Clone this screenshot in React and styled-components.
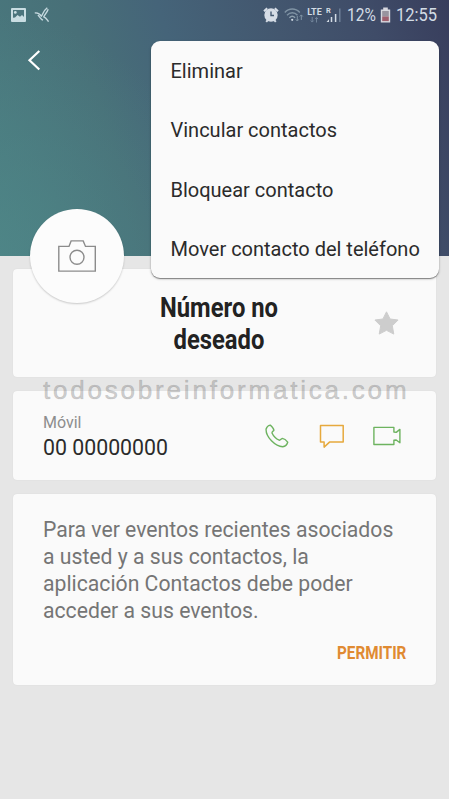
import styled, { createGlobalStyle } from "styled-components";

const GlobalStyle = createGlobalStyle`
  * {
    box-sizing: border-box;
  }
  body {
    margin: 0;
    font-family: Roboto, "Liberation Sans", sans-serif;
    background-color: #e6e6e6;
  }
`;

const Screen = styled.div`
  position: relative;
  width: 449px;
  height: 799px;
  overflow: hidden;
  background-color: #e6e6e6;
`;

const Header = styled.header`
  height: 256px;
  background: radial-gradient(
      ellipse 260px 260px at -30px 270px,
      rgba(80, 138, 138, 0.75),
      rgba(78, 126, 132, 0)
    ),
    linear-gradient(72deg, #4a7c80 0%, #487078 28%, #456479 45%, #43576f 66%, #3f4c68 84%, #383d5c 100%);
`;

const StatusBar = styled.div`
  display: flex;
  align-items: center;
  justify-content: space-between;
  height: 30px;
  padding: 0 11px 0 11px;
  color: #d3dce5;
`;

const StatusGroup = styled.div`
  display: flex;
  align-items: center;
`;

const StatusIcon = styled.svg`
  display: block;
  flex: none;
  margin-left: ${(props) => props.$gap || 0}px;
`;

const StatusText = styled.div`
  width: ${(props) => props.$width}px;
  margin-left: ${(props) => props.$gap}px;
  font-size: 19px;
  line-height: 32px;
  white-space: nowrap;
  transform: scaleX(${(props) => props.$squeeze});
  transform-origin: left center;
`;

const Network = styled.div`
  display: flex;
  flex-direction: column;
  align-items: center;
  width: 17px;
  margin-left: 2px;
  font-size: 9px;
  font-weight: 700;
  line-height: 9px;
`;

const BackButton = styled.button`
  display: block;
  margin: 18px 0 0 26px;
  padding: 0;
  border: none;
  background: none;
  cursor: pointer;
`;

const Menu = styled.ul`
  position: absolute;
  top: 41px;
  left: 151px;
  z-index: 2;
  width: 288px;
  height: 237px;
  margin: 0;
  padding: 0;
  list-style: none;
  background-color: #fafafa;
  border-radius: 9px;
  box-shadow: 0 1px 1px rgba(0, 0, 0, 0.4), 0 1px 3px rgba(0, 0, 0, 0.2);
`;

const MenuItem = styled.li`
  display: flex;
  align-items: center;
  height: 59.5px;
  padding-left: 19.5px;
  font-size: 20px;
  color: #2b2b2b;
  white-space: nowrap;
`;

const Avatar = styled.div`
  position: absolute;
  top: 209px;
  left: 30px;
  z-index: 1;
  display: flex;
  align-items: center;
  justify-content: center;
  width: 94px;
  height: 94px;
  border-radius: 50%;
  background-color: #fcfcfc;
  box-shadow: 0 1px 2px rgba(0, 0, 0, 0.2);
`;

const Cards = styled.main`
  display: flex;
  flex-direction: column;
  gap: 14px;
  padding: 13px;
`;

const Card = styled.section`
  height: ${(props) => props.$height}px;
  background-color: #fafafa;
  border-radius: 4px;
  box-shadow: 0 0 1px rgba(0, 0, 0, 0.12);
`;

const NameCard = styled(Card)`
  display: grid;
  grid-template-columns: 106px 200px 1fr;
  align-items: center;
`;

const Name = styled.h1`
  grid-column: 2;
  margin: 2px 0 0;
  font-size: 27.5px;
  line-height: 32px;
  font-weight: 700;
  text-align: center;
  color: #222;
  transform: scaleX(0.865);
`;

const Favorite = styled.svg`
  justify-self: end;
  margin-right: 37px;
`;

const PhoneCard = styled(Card)`
  display: flex;
  align-items: center;
  justify-content: space-between;
  padding: 0 35px 0 30px;
`;

const Label = styled.div`
  padding-top: 3px;
  font-size: 16px;
  line-height: 20px;
  color: #8d8d8d;
`;

const Number = styled.div`
  font-size: 21.3px;
  line-height: 29px;
  color: #2b2b2b;
  white-space: nowrap;
`;

const Actions = styled.div`
  display: flex;
  align-items: center;
`;

const ActionIcon = styled.svg`
  display: block;
  margin-left: ${(props) => props.$gap || 0}px;
`;

const EventsCard = styled(Card)`
  padding: 22px 28px 0 30px;
`;

const Message = styled.p`
  margin: 0;
  font-size: 21.2px;
  line-height: 27px;
  color: #757575;
  white-space: nowrap;
`;

const AllowButton = styled.button`
  display: block;
  width: 71px;
  margin: 17px 0 0 auto;
  padding: 0;
  border: none;
  background: none;
  font-family: inherit;
  font-size: 17.5px;
  line-height: 24px;
  font-weight: 700;
  text-align: left;
  white-space: nowrap;
  color: #e08a32;
  transform: scaleX(0.87);
  transform-origin: left center;
  cursor: pointer;
`;

const Watermark = styled.div`
  position: absolute;
  top: 375px;
  left: 43px;
  font-family: "Liberation Sans", sans-serif;
  font-size: 26px;
  line-height: 30px;
  letter-spacing: 2.8px;
  color: rgba(120, 120, 120, 0.34);
  -webkit-text-stroke: 0.7px rgba(120, 120, 120, 0.24);
  white-space: nowrap;
  pointer-events: none;
`;

const options = [
  "Eliminar",
  "Vincular contactos",
  "Bloquear contacto",
  "Mover contacto del teléfono",
];

const App = () => {
  return (
    <Screen>
      <GlobalStyle />
      <Header>
        <StatusBar>
          <StatusGroup>
            <StatusIcon width="15" height="14" viewBox="0 0 15 14">
              <rect width="15" height="14" rx="1" fill="#c9dde2" />
              <path d="M2 2h11v7l-2-2-2 1.800L6.500 7 4 9.500 2 9.800z" fill="#4b747c" />
              <circle cx="4.3" cy="4.4" r="1.4" fill="#c9dde2" />
            </StatusIcon>
            <StatusIcon $gap={8} width="16" height="16" viewBox="0 0 16 16">
              <path
                d="M0.800 6C3.500 5.600 5.500 6.200 7.300 9.200 9 7.500 8.500 4.500 13.300 0.800M4 7.800C5.500 10 7.500 12.500 9 13.200M14.200 2.200C13.200 5 10.800 7.800 9.800 9.800 12 10.500 13.200 12.800 14.600 14.700"
                fill="none"
                stroke="#c5d9df"
                strokeWidth="1.4"
              />
            </StatusIcon>
          </StatusGroup>
          <StatusGroup>
            <StatusIcon width="16" height="16" viewBox="0 0 16 16">
              <path d="M1 4.3 4.2 1.2M15 4.3 11.8 1.2M3.2 14.8l1.7-2M12.8 14.8l-1.7-2" stroke="#d6dde6" strokeWidth="2" />
              <circle cx="8" cy="8" r="6.7" fill="#d6dde6" />
              <path d="M8 4.4V8.5h3" fill="none" stroke="#465b72" strokeWidth="1.4" />
            </StatusIcon>
            <StatusIcon $gap={5} width="20" height="16" viewBox="0 0 20 16">
              <g fill="none" stroke="#7f93a4" strokeWidth="1.4">
                <path d="M0.8 5.5C5 0.8 11.5 0.8 15.8 5.5" />
                <path d="M3 8.2c3-3.200 7.500-3.200 10.500 0" />
                <path d="M5.400 10.700c1.700-1.700 4-1.700 5.700 0" stroke="#8d9fae" />
                <path d="M13.300 9v5M11.800 12.400l1.500 1.600 1.500-1.600M17.300 13v-5M15.800 9.500l1.500-1.600L18.800 9.500" strokeWidth="1" />
              </g>
              <circle cx="8.2" cy="12.8" r="1.1" fill="#d3dce5" />
            </StatusIcon>
            <Network>
              LTE
              <svg width="9" height="6" viewBox="0 0 9 6">
                <path
                  d="M2.200 0v5M0.700 3.500l1.500 1.600 1.500-1.600M6.500 5.500v-5M5 2l1.500-1.600L8 2"
                  fill="none"
                  stroke="#71849a"
                />
              </svg>
            </Network>
            <StatusIcon $gap={3} width="16" height="16" viewBox="0 0 16 16">
              <text x="0" y="6.2" fontSize="7.5" fontWeight="700" fill="#d3dce5">
                R
              </text>
              <path d="M0.500 15 3 12.300V15z" fill="#d3dce5" />
              <path d="M5.500 10V15M9.600 7v8" stroke="#d3dce5" strokeWidth="1.5" />
              <path d="M13.800 1.500V15" stroke="#70829a" strokeWidth="1.4" />
            </StatusIcon>
            <StatusText $width={29} $gap={5} $squeeze={0.82}>
              12%
            </StatusText>
            <StatusIcon $gap={4} width="11" height="16" viewBox="0 0 11 16">
              <path d="M3.200 0.500h4.600v2H10.200V15.500H0.800V2.500h2.400z" fill="#d7d8df" />
              <rect x="2.2" y="4" width="6.6" height="5.5" fill="#98949f" />
              <rect x="2.2" y="9.5" width="6.6" height="4.6" fill="#9e606f" />
            </StatusIcon>
            <StatusText $width={42} $gap={5} $squeeze={0.87}>
              12:55
            </StatusText>
          </StatusGroup>
        </StatusBar>
        <BackButton aria-label="Atrás">
          <svg width="16" height="24" viewBox="0 0 16 24" display="block">
            <path d="M13.300 3 3.500 12.300l9.800 9.200" fill="none" stroke="#fff" strokeWidth="2.2" />
          </svg>
        </BackButton>
      </Header>

      <Menu>
        {options.map((option) => (
          <MenuItem key={option}>{option}</MenuItem>
        ))}
      </Menu>

      <Avatar>
        <svg width="38" height="32" viewBox="0 0 38 32">
          <g fill="none" stroke="#8c8c8c" strokeWidth="1.4">
            <path d="M0.800 6.400H11L13.100 0.900h12.100l2.300 5.500h9.800v24.700H0.800z" />
            <circle cx="19" cy="17.3" r="7" />
          </g>
        </svg>
      </Avatar>

      <Cards>
        <NameCard $height={108}>
          <Name>
            Número no
            <br />
            deseado
          </Name>
          <Favorite width="25" height="24" viewBox="0 0 25 24">
            <path
              d="M12.500 0.800l3.600 7.200 8 1-5.800 5.800 1.500 8.300-7.300-3.800L5.200 23.100l1.500-8.300L0.900 9l8-1z"
              fill="#cdcdcd"
              stroke="#cdcdcd"
              strokeLinejoin="round"
            />
          </Favorite>
        </NameCard>

        <PhoneCard $height={89}>
          <div>
            <Label>Móvil</Label>
            <Number>00 00000000</Number>
          </div>
          <Actions>
            <ActionIcon width="24" height="24" viewBox="0 0 24 24">
              <path
                d="M1.100 5C1.700 3 3 1.500 5.200 1.100 6.600 2.400 8.600 4.400 8.900 6.100 8.300 7.400 6.900 7.700 7 9 8.300 11.800 11.300 14.900 14.200 16.200 15.500 16.400 16 14.900 17.300 14.400 19.200 14.700 21.300 16.300 22.700 18.200 22 20.700 20.300 22.300 17.700 22.700 10.500 22.700 0.500 13 1.100 5z"
                fill="none"
                stroke="#6db35f"
                strokeWidth="1.4"
                strokeLinejoin="round"
              />
            </ActionIcon>
            <ActionIcon $gap={30} width="26" height="26" viewBox="0 0 26 26">
              <path
                d="M1.500 2.400h22.700v16.700H10.500l-5.400 5v-5H1.500z"
                fill="none"
                stroke="#e6a93d"
                strokeWidth="1.5"
                strokeLinejoin="round"
              />
            </ActionIcon>
            <ActionIcon $gap={28} width="28" height="20" viewBox="0 0 28 20">
              <path
                d="M0.900 1.400h20v4.600l2.300.4 3.700-3v13.400l-3.700-2.800-2.300.2v4.300h-20z"
                fill="none"
                stroke="#6db35f"
                strokeWidth="1.4"
                strokeLinejoin="round"
              />
            </ActionIcon>
          </Actions>
        </PhoneCard>

        <EventsCard $height={191}>
          <Message>
            Para ver eventos recientes asociados
            <br />
            a usted y a sus contactos, la
            <br />
            aplicación Contactos debe poder
            <br />
            acceder a sus eventos.
          </Message>
          <AllowButton>PERMITIR</AllowButton>
        </EventsCard>
      </Cards>

      <Watermark>todosobreinformatica.com</Watermark>
    </Screen>
  );
};

export default App;
